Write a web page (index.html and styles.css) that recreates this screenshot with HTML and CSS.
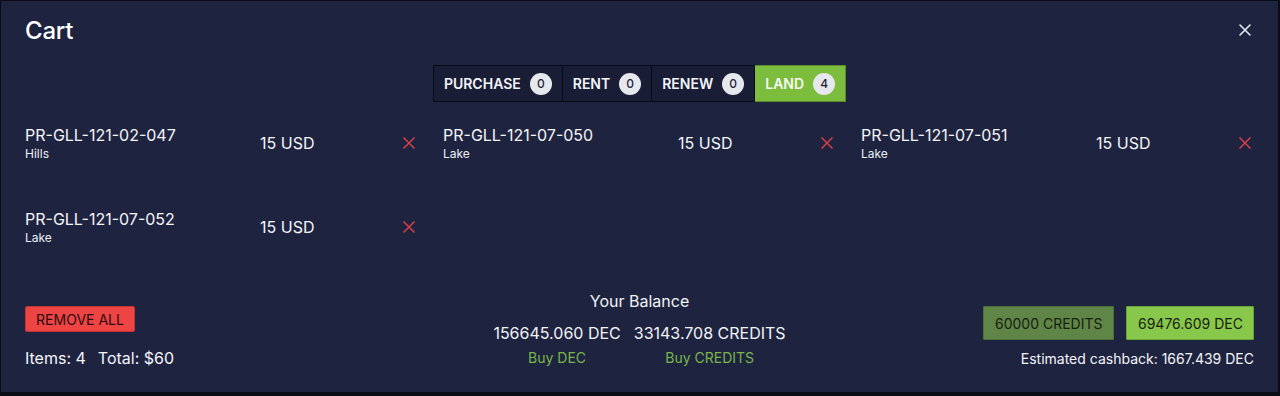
FILE: index.html
```html
<!DOCTYPE html>
<html>
<head>
<meta charset="utf-8">
<link rel="stylesheet" href="styles.css">
</head>
<body>
<div class="modal">
  <div class="header">
    <h1 class="title">Cart</h1>
    <button class="close" aria-label="Close">
      <svg width="14" height="14" viewBox="0 0 14 14"><path d="M2 2L12 12M12 2L2 12" stroke="#e6e8f0" stroke-width="1.6" stroke-linecap="round"/></svg>
    </button>
  </div>
  <div class="tabs">
    <div class="tab">PURCHASE <span class="badge">0</span></div>
    <div class="tab">RENT <span class="badge">0</span></div>
    <div class="tab">RENEW <span class="badge">0</span></div>
    <div class="tab active">LAND <span class="badge">4</span></div>
  </div>
  <div class="items">
    <div class="item">
      <div class="info"><div class="name">PR-GLL-121-02-047</div><div class="type">Hills</div></div>
      <div class="price">15 USD</div>
      <svg class="remove" width="14" height="14" viewBox="0 0 14 14"><path d="M1.5 1.5L12.5 12.5M12.5 1.5L1.5 12.5" stroke="#d6404a" stroke-width="1.5"/></svg>
    </div>
    <div class="item">
      <div class="info"><div class="name">PR-GLL-121-07-050</div><div class="type">Lake</div></div>
      <div class="price">15 USD</div>
      <svg class="remove" width="14" height="14" viewBox="0 0 14 14"><path d="M1.5 1.5L12.5 12.5M12.5 1.5L1.5 12.5" stroke="#d6404a" stroke-width="1.5"/></svg>
    </div>
    <div class="item">
      <div class="info"><div class="name">PR-GLL-121-07-051</div><div class="type">Lake</div></div>
      <div class="price">15 USD</div>
      <svg class="remove" width="14" height="14" viewBox="0 0 14 14"><path d="M1.5 1.5L12.5 12.5M12.5 1.5L1.5 12.5" stroke="#d6404a" stroke-width="1.5"/></svg>
    </div>
    <div class="item">
      <div class="info"><div class="name">PR-GLL-121-07-052</div><div class="type">Lake</div></div>
      <div class="price">15 USD</div>
      <svg class="remove" width="14" height="14" viewBox="0 0 14 14"><path d="M1.5 1.5L12.5 12.5M12.5 1.5L1.5 12.5" stroke="#d6404a" stroke-width="1.5"/></svg>
    </div>
  </div>
  <div class="footer">
    <div class="left">
      <button class="remove-all">REMOVE ALL</button>
      <div class="totals"><span>Items: 4</span><span>Total: $60</span></div>
    </div>
    <div class="balance">
      <div class="balance-title">Your Balance</div>
      <div class="balance-row">
        <div class="bal-col"><div class="amount">156645.060 DEC</div><a class="buy">Buy DEC</a></div>
        <div class="bal-col"><div class="amount">33143.708 CREDITS</div><a class="buy">Buy CREDITS</a></div>
      </div>
    </div>
    <div class="right">
      <div class="pay">
        <button class="pay-btn credits">60000 CREDITS</button>
        <button class="pay-btn dec">69476.609 DEC</button>
      </div>
      <div class="cashback">Estimated cashback: 1667.439 DEC</div>
    </div>
  </div>
</div>
<div class="under"></div>
</body>
</html>
```

FILE: styles.css
```css
* { box-sizing: border-box; }
html, body {
  margin: 0;
  padding: 0;
  background: #0b0d16;
  height: 396px;
  overflow: hidden;
  font-family: Inter, "Noto Sans", sans-serif;
  color: #f2f3f7;
}
.modal {
  margin: 1px 2px 0 1px;
  height: 391px;
  background: #1e2340;
  padding: 14px 24px 0 24px;
  position: relative;
}
.header {
  display: flex;
  justify-content: space-between;
  align-items: center;
  height: 30px;
}
.title {
  margin: 0;
  font-size: 24px;
  font-weight: 500;
  color: #ffffff;
  letter-spacing: -0.2px;
}
.close {
  background: none;
  border: none;
  padding: 0;
  width: 14px;
  height: 14px;
  display: flex;
  margin-right: 2px;
}
.tabs {
  display: flex;
  justify-content: center;
  margin-top: 20px;
  margin-left: 0;
}
.tab {
  display: flex;
  align-items: center;
  gap: 9px;
  height: 37px;
  padding: 0 10px;
  background: #191d36;
  border: 1px solid #080a14;
  font-size: 14px;
  font-weight: 600;
  color: #f4f5f9;
  white-space: nowrap;
}
.tab + .tab { border-left: none; }
.tab.active {
  background: #7cbd3e;
  border-color: #5a8a2c;
  color: #f6faf0;
}
.badge {
  display: inline-flex;
  align-items: center;
  justify-content: center;
  width: 22px;
  height: 22px;
  border-radius: 50%;
  background: #e7e8ee;
  color: #222638;
  font-size: 12px;
  font-weight: 500;
}
.items {
  display: grid;
  grid-template-columns: repeat(3, 418px);
  row-gap: 44px;
  margin-top: 21px;
}
.item {
  display: grid;
  grid-template-columns: 235px 1fr 14px;
  align-items: center;
  padding-right: 27px;
  height: 40px;
}
.name {
  font-size: 16px;
  font-weight: 400;
  color: #f4f5f9;
  line-height: 20px;
  margin-top: -1px;
}
.type {
  font-size: 12px;
  color: #eef0f5;
  line-height: 14px;
  margin-top: 2px;
}
.price {
  font-size: 16px;
  color: #f4f5f9;
}
.remove { display: block; }
.footer {
  display: grid;
  grid-template-columns: 1fr auto 1fr;
  margin-top: 44px;
}
.left {
  display: flex;
  flex-direction: column;
  align-items: flex-start;
  padding-top: 15px;
}
.remove-all {
  background: #ef4444;
  border: 1px solid #c53434;
  border-radius: 2px;
  color: #2a0d10;
  font-family: Inter, sans-serif;
  font-size: 14px;
  height: 26px;
  padding: 0 10px;
  width: 110px;
  white-space: nowrap;
}
.totals {
  display: flex;
  gap: 12px;
  font-size: 16px;
  margin-top: 16px;
  color: #f4f5f9;
}
.balance {
  display: flex;
  flex-direction: column;
  align-items: center;
}
.balance-title {
  font-size: 16px;
  line-height: 20px;
  margin-top: 0px;
}
.balance-row {
  display: flex;
  gap: 13px;
  margin-top: 12px;
}
.bal-col {
  display: flex;
  flex-direction: column;
  align-items: center;
}
.amount { font-size: 16px; line-height: 20px; }
.buy {
  font-size: 14px;
  color: #79b54a;
  margin-top: 6px;
}
.right {
  display: flex;
  flex-direction: column;
  align-items: flex-end;
  padding-top: 15px;
}
.pay {
  display: flex;
  gap: 12px;
}
.pay-btn {
  height: 34px;
  border-radius: 1px;
  font-family: Inter, sans-serif;
  font-size: 14px;
  color: #1a2012;
  padding: 0 11px;
  white-space: nowrap;
}
.pay-btn.credits {
  background: #5f8547;
  border: 1px solid #4e7039;
  width: 131px;
}
.pay-btn.dec {
  background: #87c84a;
  border: 1px solid #6aa436;
  width: 128px;
}
.cashback {
  font-size: 14px;
  margin-top: 10px;
  color: #f4f5f9;
}
.under { height: 4px; }
```
